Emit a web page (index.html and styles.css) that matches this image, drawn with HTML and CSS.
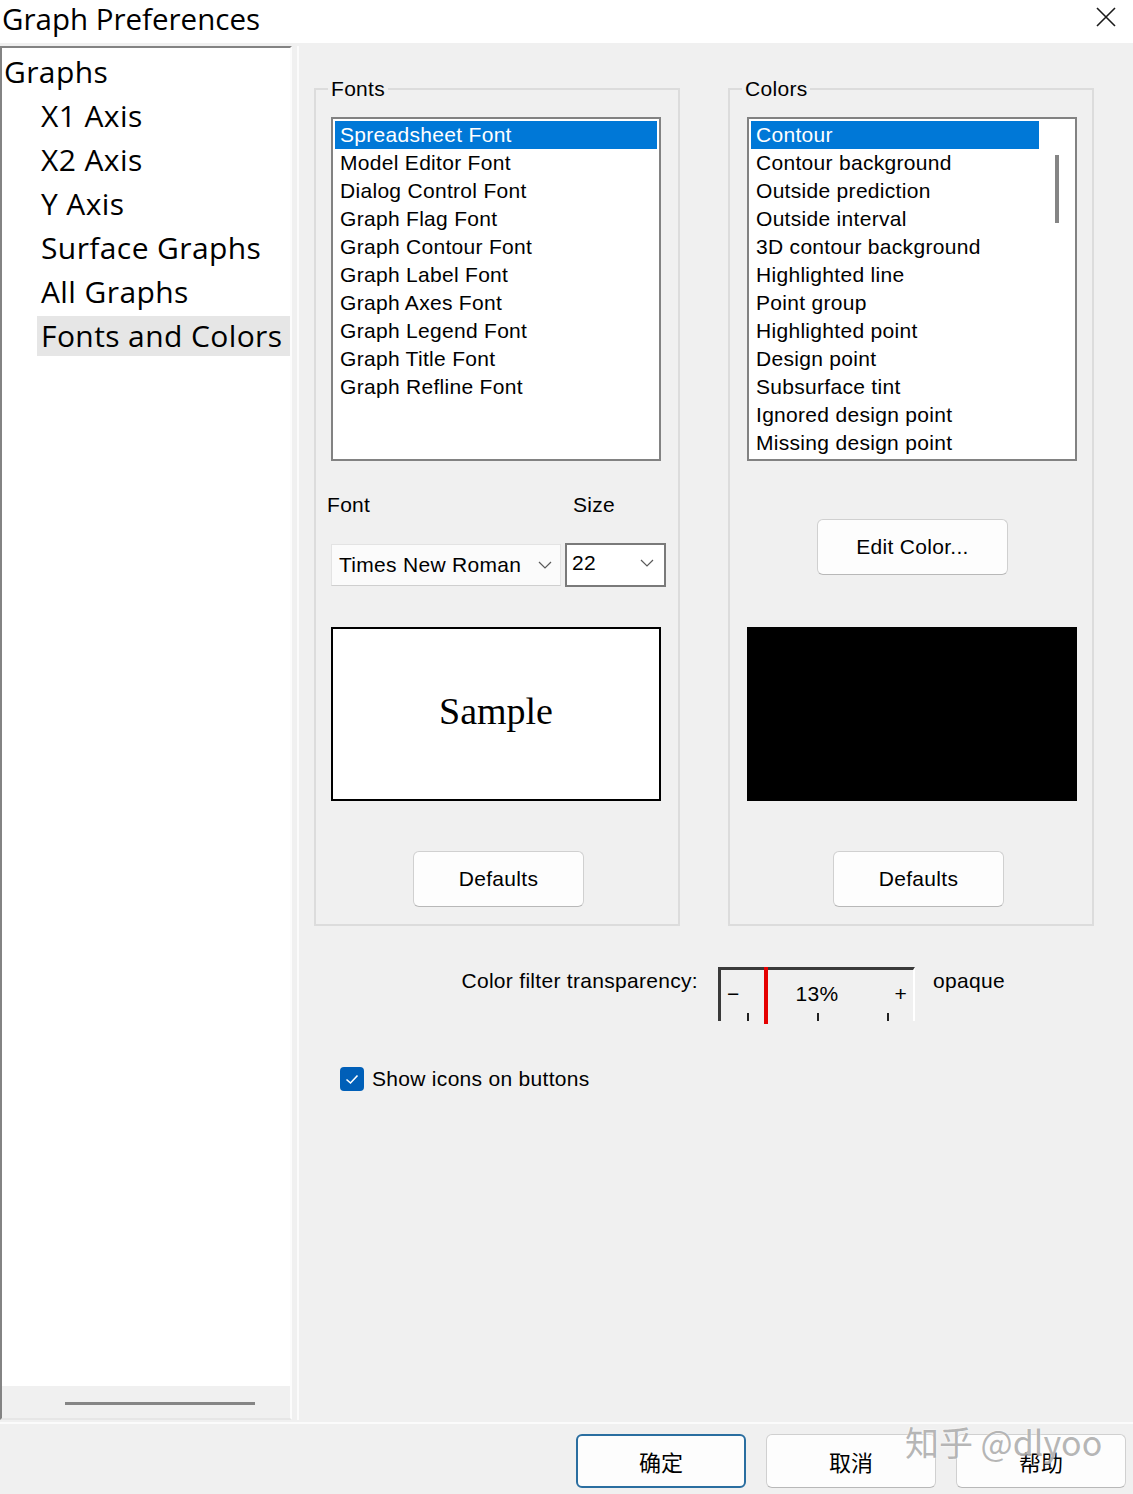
FILE: index.html
```html
<!DOCTYPE html>
<html lang="en">
<head>
    <meta charset="UTF-8">
    <meta name="viewport" content="width=device-width, initial-scale=1.0">
    <title>Graph Preferences</title>
    <link rel="stylesheet" href="styles.css">
</head>
<body>

    <div class="window">
        <div class="titlebar">
            <span class="title">Graph Preferences</span>
            <button class="close" aria-label="Close">
                <svg width="20" height="20" viewBox="0 0 20 20"><path d="M1 1L19 19M19 1L1 19" stroke="#1a1a1a" stroke-width="1.6" fill="none"/></svg>
            </button>
        </div>

        <div class="main">
            <div class="tree">
                <ul class="tree-list">
                    <li class="root"><span>Graphs</span></li>
                    <li class="child"><span>X1 Axis</span></li>
                    <li class="child"><span>X2 Axis</span></li>
                    <li class="child"><span>Y Axis</span></li>
                    <li class="child"><span>Surface Graphs</span></li>
                    <li class="child"><span>All Graphs</span></li>
                    <li class="child selected"><span>Fonts and Colors</span></li>
                </ul>
                <div class="hscroll"><span class="hthumb"></span></div>
            </div>

            <div class="content">
                <div class="groups">
                    <fieldset class="group">
                        <legend>Fonts</legend>
                        <ul class="listbox">
                            <li class="sel">Spreadsheet Font</li>
                            <li>Model Editor Font</li>
                            <li>Dialog Control Font</li>
                            <li>Graph Flag Font</li>
                            <li>Graph Contour Font</li>
                            <li>Graph Label Font</li>
                            <li>Graph Axes Font</li>
                            <li>Graph Legend Font</li>
                            <li>Graph Title Font</li>
                            <li>Graph Refline Font</li>
                        </ul>
                        <div class="field-labels">
                            <span class="font-label">Font</span>
                            <span>Size</span>
                        </div>
                        <div class="combos">
                            <div class="combo font-combo">
                                <span>Times New Roman</span>
                                <svg width="14" height="8" viewBox="0 0 14 8"><polyline points="1,1 7,7 13,1" stroke="#5a5a5a" stroke-width="1.2" fill="none"/></svg>
                            </div>
                            <div class="combo size-combo">
                                <span>22</span>
                                <svg width="14" height="8" viewBox="0 0 14 8"><polyline points="1,1 7,7 13,1" stroke="#5a5a5a" stroke-width="1.2" fill="none"/></svg>
                            </div>
                        </div>
                        <div class="sample">Sample</div>
                        <button class="btn defaults fonts-defaults">Defaults</button>
                    </fieldset>

                    <fieldset class="group colors">
                        <legend>Colors</legend>
                        <div class="listbox scrolled">
                            <ul class="items">
                                <li class="sel">Contour</li>
                                <li>Contour background</li>
                                <li>Outside prediction</li>
                                <li>Outside interval</li>
                                <li>3D contour background</li>
                                <li>Highlighted line</li>
                                <li>Point group</li>
                                <li>Highlighted point</li>
                                <li>Design point</li>
                                <li>Subsurface tint</li>
                                <li>Ignored design point</li>
                                <li>Missing design point</li>
                            </ul>
                            <div class="vscroll"><span class="vthumb"></span></div>
                        </div>
                        <button class="btn edit-color">Edit Color...</button>
                        <div class="swatch"></div>
                        <button class="btn defaults colors-defaults">Defaults</button>
                    </fieldset>
                </div>

                <div class="transparency">
                    <span class="tp-label">Color filter transparency:</span>
                    <div class="slider">
                        <span>&minus;</span>
                        <span>13%</span>
                        <span>+</span>
                        <i class="marker"></i>
                        <i class="tick" style="left: 26px"></i>
                        <i class="tick" style="left: 96px"></i>
                        <i class="tick" style="left: 166px"></i>
                    </div>
                    <span class="opaque">opaque</span>
                </div>

                <label class="check">
                    <span class="box">
                        <svg width="24" height="24" viewBox="0 0 24 24"><polyline points="6.5,12.5 10.5,16 17.5,8.5" stroke="#fff" stroke-width="1.6" fill="none"/></svg>
                    </span>
                    Show icons on buttons
                </label>
            </div>
        </div>

        <div class="footer">
            <button class="btn primary">确定</button>
            <button class="btn">取消</button>
            <button class="btn">帮助</button>
            <span class="watermark">知乎 @dlyoo</span>
        </div>
    </div>

</body>
</html>
```

FILE: styles.css
```css
* {
    box-sizing: border-box;
}
body {
    margin: 0;
    background: #f0f0f0;
    font-family: "Liberation Sans", Arial, sans-serif;
    font-size: 21px;
    letter-spacing: 0.3px;
    color: #000;
}
.window {
    width: 1133px;
    height: 1494px;
    display: flex;
    flex-direction: column;
    position: relative;
    overflow: hidden;
}
.titlebar {
    height: 43px;
    background: #fff;
    display: flex;
    justify-content: space-between;
    align-items: flex-start;
}
.title {
    font-family: "Open Sans", "Noto Sans", sans-serif;
    font-size: 29.5px;
    line-height: 37px;
    padding-left: 2px;
    letter-spacing: 0;
}
.close {
    margin: 7px 17px 0 0;
    padding: 0;
    border: none;
    background: none;
    width: 20px;
    height: 20px;
}
.main {
    flex: 1;
    display: flex;
    padding: 3px 0 2px;
}

/* left tree */
.tree {
    width: 292px;
    background: #fff;
    border-top: 2px solid #838383;
    border-left: 2px solid #838383;
    border-right: 2px solid #fcfcfc;
    border-bottom: 2px solid #e6e6e6;
    display: flex;
    flex-direction: column;
}
.tree-list {
    list-style: none;
    margin: 0;
    padding: 2px 0 0;
    flex: 1;
    font-family: "Open Sans", "Noto Sans", sans-serif;
    font-size: 30px;
    letter-spacing: 0.4px;
}
.tree-list li {
    height: 44px;
    padding: 2px 0;
}
.tree-list li span {
    display: block;
    height: 40px;
    line-height: 40px;
    padding-left: 2px;
    white-space: nowrap;
}
.tree-list .child span {
    margin-left: 35px;
    padding-left: 4px;
}
.tree-list .selected span {
    background: #e6e6e6;
}
.hscroll {
    height: 32px;
    background: #f0f0f0;
    display: flex;
    align-items: center;
    padding: 2px 0 0 63px;
}
.hthumb {
    width: 190px;
    height: 3px;
    background: #858585;
}

/* right side */
.content {
    flex: 1;
    margin-left: 5px;
    border-left: 2px solid #fbfbfb;
    padding: 31px 0 0 15px;
}
.groups {
    display: flex;
    gap: 48px;
}
.group {
    width: 366px;
    min-width: 0;
    margin: 0;
    border: 2px solid #dcdcdc;
    padding: 0 17px 17px 15px;
    display: flex;
    flex-direction: column;
    align-items: flex-start;
}
.group legend {
    padding: 0 3px;
    margin-left: -3px;
    line-height: 24px;
}
.listbox {
    width: 330px;
    height: 344px;
    margin: 16px 0 0;
    padding: 2px;
    border: 2px solid #828282;
    background: #fff;
    list-style: none;
}
.listbox li,
.listbox .items li {
    height: 28px;
    line-height: 28px;
    padding-left: 5px;
    white-space: nowrap;
}
.listbox .sel {
    background: #0078d7;
    color: #fff;
}
.scrolled {
    display: flex;
    overflow: hidden;
}
.scrolled .items {
    list-style: none;
    margin: 0;
    padding: 0;
    width: 288px;
}
.vscroll {
    flex: 1;
    padding: 34px 0 0 16px;
}
.vthumb {
    display: block;
    width: 4px;
    height: 68px;
    background: #858585;
}
.field-labels {
    display: flex;
    margin-top: 32px;
    margin-left: -4px;
    line-height: 24px;
}
.font-label {
    width: 246px;
}
.combos {
    display: flex;
    align-items: flex-start;
    margin-top: 26px;
}
.combo {
    display: flex;
    align-items: center;
    justify-content: space-between;
    background: #fff;
}
.font-combo {
    width: 230px;
    height: 42px;
    margin-top: 1px;
    border: 1px solid #e3e3e3;
    border-bottom-color: #cfcfcf;
    background: #fbfbfb;
    padding: 0 8px 0 7px;
}
.size-combo {
    width: 101px;
    height: 44px;
    margin-left: 4px;
    border: 2px solid #7a7a7a;
    padding: 0 10px 4px 5px;
}
.sample {
    width: 330px;
    height: 174px;
    margin-top: 40px;
    border: 2px solid #000;
    background: #fff;
    display: flex;
    align-items: center;
    justify-content: center;
    padding-bottom: 6px;
    font-family: "Liberation Serif", "Times New Roman", serif;
    font-size: 38px;
    letter-spacing: 0;
}
.swatch {
    width: 330px;
    height: 174px;
    margin-top: 52px;
    margin-left: 2px;
    background: #000;
}
.btn {
    font: inherit;
    letter-spacing: inherit;
    color: #000;
    background: #fdfdfd;
    border: 1px solid #d0d0d0;
    border-bottom-color: #b8b8b8;
    border-radius: 6px;
    padding: 0;
}
.defaults {
    width: 171px;
    height: 56px;
    margin-top: 50px;
}
.fonts-defaults {
    margin-left: 82px;
}
.colors-defaults {
    margin-left: 88px;
}
.edit-color {
    width: 191px;
    height: 56px;
    margin-top: 58px;
    margin-left: 72px;
}
.colors .listbox {
    margin-left: 2px;
}

/* transparency slider */
.transparency {
    display: flex;
    align-items: flex-start;
    margin-top: 41px;
}
.tp-label {
    width: 384px;
    text-align: right;
    line-height: 28px;
}
.slider {
    position: relative;
    width: 197px;
    height: 54px;
    margin-left: 20px;
    border-top: 3px solid #3a3a3a;
    border-left: 3px solid #3a3a3a;
    border-right: 2px solid #fff;
    display: flex;
    justify-content: space-between;
    align-items: center;
    padding: 0 6px 4px 6px;
}
.marker {
    position: absolute;
    left: 43px;
    top: -3px;
    width: 4px;
    height: 57px;
    background: #e50000;
}
.tick {
    position: absolute;
    bottom: 0;
    width: 2px;
    height: 8px;
    background: #222;
}
.opaque {
    margin-left: 18px;
    line-height: 28px;
}
.check {
    display: flex;
    align-items: center;
    gap: 8px;
    margin: 45px 0 0 26px;
    line-height: 26px;
}
.box {
    width: 24px;
    height: 24px;
    border-radius: 4px;
    background: #005fb8;
}
.box svg {
    display: block;
}

/* bottom buttons */
.footer {
    height: 72px;
    border-top: 2px solid #fbfbfb;
    display: flex;
    justify-content: flex-end;
    align-items: flex-start;
    gap: 20px;
    padding: 10px 7px 0 0;
}
.footer .btn {
    width: 170px;
    height: 54px;
    font-size: 22px;
    font-family: "Noto Sans CJK SC", sans-serif;
    letter-spacing: 0;
}
.footer .primary {
    border: 2px solid #2a6ea0;
}
.watermark {
    position: absolute;
    left: 905px;
    top: 1417px;
    font-family: "Noto Sans CJK SC", sans-serif;
    font-size: 34px;
    letter-spacing: 0;
    color: rgba(150, 150, 150, 0.7);
    text-shadow: 0 0 2px #fff;
}
```
